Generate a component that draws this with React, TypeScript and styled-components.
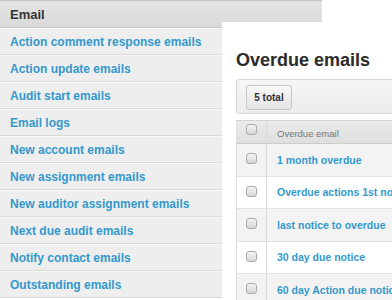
import React from 'react';
import styled, {createGlobalStyle} from 'styled-components';

const GlobalStyle = createGlobalStyle`
    html, body {
        margin: 0;
        padding: 0;
        background: #ffffff;
        overflow: hidden;
        font-family: "Liberation Sans", Arial, sans-serif;
    }
`

const sideLinks = [
    'Action comment response emails',
    'Action update emails',
    'Audit start emails',
    'Email logs',
    'New account emails',
    'New assignment emails',
    'New auditor assignment emails',
    'Next due audit emails',
    'Notify contact emails',
    'Outstanding emails',
]

const overdue = [
    '1 month overdue',
    'Overdue actions 1st notice',
    'last notice to overdue',
    '30 day due notice',
    '60 day Action due notice',
]

export default function App() {
    return (
        <Page>
            <GlobalStyle/>
            <Sidebar>
                <SideHeader>Email</SideHeader>
                {sideLinks.map((s) => (
                    <SideItem key={s}>{s}</SideItem>
                ))}
            </Sidebar>

            <Panel>
                <Heading>Overdue emails</Heading>
                <Toolbar>
                    <CountButton>5 total</CountButton>
                </Toolbar>

                <Table>
                    <HeadRow>
                        <CheckCell head><Check/></CheckCell>
                        <HeadLabel>Overdue email</HeadLabel>
                    </HeadRow>
                    {overdue.map((o, i) => (
                        <Row key={o} striped={i % 2 === 0}>
                            <CheckCell><Check/></CheckCell>
                            <LinkCell>{o}</LinkCell>
                        </Row>
                    ))}
                </Table>
            </Panel>
        </Page>
    )
}

const Page = styled.div`
    position: relative;
    width: 392px;
    height: 300px;
    overflow: hidden;
`

const Sidebar = styled.div`
    width: 322px;
    background: #eeeeee;
    display: flex;
    flex-direction: column;
`

const SideHeader = styled.div`
    height: 26px;
    border-top: 1px solid #c4c4c4;
    border-bottom: 1px solid #c8c8c8;
    background: linear-gradient(#e4e4e4, #d9d9d9);
    display: flex;
    align-items: center;
    padding-left: 10px;
    font-size: 13px;
    font-weight: bold;
    color: #333333;
`

const SideItem = styled.div`
    height: 25px;
    border-top: 1px solid #f8f8f8;
    border-bottom: 1px solid #d9d9d9;
    display: flex;
    align-items: center;
    padding-left: 10px;
    font-size: 12px;
    font-weight: bold;
    color: #3399cc;
`

const Panel = styled.div`
    position: absolute;
    left: 222px;
    top: 22px;
    width: 220px;
    bottom: 0;
    background: #ffffff;
    padding: 27px 0 0 14px;
`

const Heading = styled.h1`
    margin: 0 0 8px 0;
    font-size: 18px;
    line-height: 22px;
    font-weight: bold;
    color: #2b2b2b;
`

const Toolbar = styled.div`
    height: 33px;
    border: 1px solid #d6d6d6;
    border-right: none;
    border-radius: 3px 0 0 3px;
    background: linear-gradient(#f6f6f6, #ececec);
    display: flex;
    align-items: flex-start;
    padding: 5px 0 0 9px;
    box-sizing: border-box;
    height: 35px;
`

const CountButton = styled.div`
    width: 46px;
    height: 25px;
    box-sizing: border-box;
    border: 1px solid #c6c6c6;
    border-radius: 3px;
    background: linear-gradient(#f8f8f8, #e4e4e4);
    display: flex;
    align-items: center;
    justify-content: center;
    font-size: 10px;
    font-weight: bold;
    color: #333333;
`

const Table = styled.div`
    margin-top: 6px;
    border-left: 1px solid #dddddd;
    border-top: 1px solid #d4d4d4;
    display: flex;
    flex-direction: column;
`

const HeadRow = styled.div`
    height: 22px;
    display: grid;
    grid-template-columns: 30px 1fr;
    background: linear-gradient(#ebebeb, #dedede);
    border-bottom: 1px solid #cccccc;
`

const Row = styled.div<{striped?: boolean}>`
    height: 31.5px;
    display: grid;
    grid-template-columns: 30px 1fr;
    background: ${(p) => (p.striped ? '#f3f3f3' : '#ffffff')};
    border-bottom: 1px solid #e2e2e2;
`

const CheckCell = styled.div<{head?: boolean}>`
    border-right: 1px solid #dcdcdc;
    padding: ${(p) => (p.head ? '3px' : '9px')} 0 0 9px;
`

const Check = styled.div`
    width: 11px;
    height: 11px;
    box-sizing: border-box;
    border: 1px solid #a9a9a9;
    border-radius: 3px;
    background: linear-gradient(#f4f4f4, #d6d6d6);
`

const HeadLabel = styled.div`
    display: flex;
    align-items: center;
    padding-left: 10px;
    padding-top: 2px;
    font-size: 9.5px;
    color: #777777;
    white-space: nowrap;
`

const LinkCell = styled.div`
    display: flex;
    align-items: center;
    padding-left: 10px;
    font-size: 10.5px;
    font-weight: bold;
    color: #3399cc;
    white-space: nowrap;
`
